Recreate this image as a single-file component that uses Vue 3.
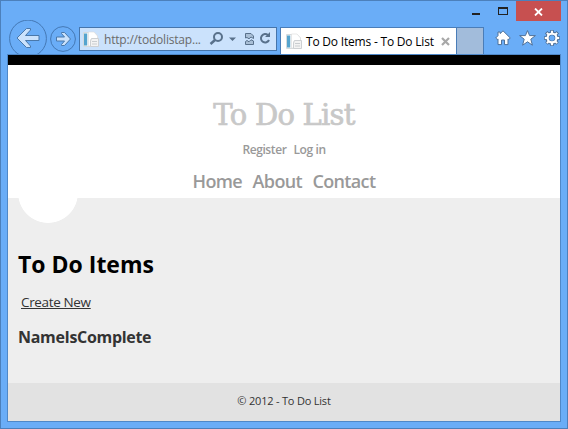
<script setup>
const account = ['Register', 'Log in']
const menu = ['Home', 'About', 'Contact']
</script>

<template>
  <div class="window">
    <div class="caption">
      <button class="ctl min" aria-label="Minimize"><svg width="8" height="2"><path d="M0 0H8V2H0Z" fill="#222" /></svg></button>
      <button class="ctl max" aria-label="Maximize"><svg width="10" height="8"><path d="M0 0H10V8H0ZM1 2V7H9V2Z" fill="#222" fill-rule="evenodd" /></svg></button>
      <button class="ctl close" aria-label="Close"><svg width="9" height="8" viewBox="0 0 9 8"><path d="M1 .5 8 7.5M8 .5 1 7.5" stroke="#fff" stroke-width="1.8" /></svg></button>
    </div>

    <div class="toolbar">
      <svg class="back" width="38" height="34" viewBox="0 0 38 34">
        <circle cx="19" cy="18.5" r="18.4" fill="none" stroke="#4478b4" />
        <path d="M8 18 17.5 8.5H21.5V10L16.5 15.5H30V20.5H16.5L21.5 26V27.5H17.5Z" fill="#cbe2fc" stroke="#4a78aa" />
      </svg>
      <svg class="forward" width="26" height="26" viewBox="0 0 26 26">
        <circle cx="13" cy="13" r="12.4" fill="none" stroke="#4478b4" />
        <path d="M20.5 13 14.5 6.5H11.5V7.5L14.5 11H6.5V15H14.5L11.5 18.5V19.5H14.5Z" fill="#cbe2fc" stroke="#4a78aa" />
      </svg>
      <div class="address">
        <svg class="page" width="17" height="17" viewBox="0 0 17 17">
          <path d="M.5 1.5H11L14.5 5V15.5H.5Z" fill="#f5f7f8" stroke="#d5dadd" />
          <path d="M1 2.5H4.2V14.5H1Z" fill="#55a4ce" />
          <path d="M5.5 1H11L14.5 5V8H8V15H5.5Z" fill="#fff" stroke="#dadada" stroke-width=".6" />
          <path d="M8.5 7.5H15.5V15.5H7.5V10Z" fill="#f3f3f3" stroke="#cdd0d3" />
          <path d="M9 10.5H14M9 13H14" stroke="#c9cdd0" />
        </svg>
        <span class="url">http://todolistap...</span>
        <svg class="tools" width="64" height="18" viewBox="0 0 64 18">
          <g fill="none" stroke="#59718b">
            <circle cx="9" cy="7" r="4" stroke-width="2" />
            <path d="M6 10 1.5 14" stroke-width="2.5" />
            <path d="M36.5 8V3.5H42L44.5 6V8.5L42 7 40 8.8 38 7.5ZM36.5 11.5V14.5H44.5V11L42 9.8 40 11.8 38 10.5Z" stroke-width="1" fill="#a9bfd6" />
            <path d="M59 5.2A4.2 4.2 0 1 0 60 10" stroke-width="2" />
          </g>
          <path d="M20 7.5H27L23.5 11ZM56 7H61V2Z" fill="#59718b" />
        </svg>
      </div>
      <div class="tab">
        <svg class="page" width="17" height="17" viewBox="0 0 17 17">
          <path d="M.5 1.5H11L14.5 5V15.5H.5Z" fill="#f5f7f8" stroke="#d5dadd" />
          <path d="M1 2.5H4.2V14.5H1Z" fill="#55a4ce" />
          <path d="M5.5 1H11L14.5 5V8H8V15H5.5Z" fill="#fff" stroke="#dadada" stroke-width=".6" />
          <path d="M8.5 7.5H15.5V15.5H7.5V10Z" fill="#f3f3f3" stroke="#cdd0d3" />
          <path d="M9 10.5H14M9 13H14" stroke="#c9cdd0" />
        </svg>
        <span class="tab-title">To Do Items - To Do List</span>
        <svg width="9" height="9" viewBox="0 0 9 9"><path d="M1 1 8 8M8 1 1 8" stroke="#a8a8a8" stroke-width="2.2" /></svg>
      </div>
      <div class="new-tab"></div>
      <div class="commands">
        <svg width="16" height="16" viewBox="0 0 16 16"><path d="M8 .8 15.3 8 13.7 9.5 13 8.9V14.6H9.5V10H6.5V14.6H3V8.9L2.3 9.5 .7 8 3 5.7V2H5.2V3.6Z" fill="#fff" stroke="#4f7199" /></svg>
        <svg width="17" height="16" viewBox="0 0 17 16"><path d="M8.5 .6 10.6 5.6H16.4L11.8 9.2 13.4 15.2 8.5 11.8 3.6 15.2 5.2 9.2 .6 5.6H6.4Z" fill="#fff" stroke="#4f7199" /></svg>
        <svg width="16" height="16" viewBox="0 0 16 16">
          <g fill="none" stroke="#4f7199">
            <circle cx="8" cy="8" r="4.5" stroke-width="4.2" />
            <path d="M8 0V16M0 8H16M2.2 2.2 13.8 13.8M13.8 2.2 2.2 13.8" stroke-width="3.6" stroke-dasharray="3 10 3" />
          </g>
          <g fill="none" stroke="#fff">
            <path d="M8 .8V3.5M8 12.5V15.2M.8 8H3.5M12.5 8H15.2M2.9 2.9 5 5M11 11 13.1 13.1M13.1 2.9 11 5M5 11 2.9 13.1" stroke-width="2" />
            <circle cx="8" cy="8" r="4.4" stroke-width="2.2" />
          </g>
          <circle cx="8" cy="8" r="2.6" fill="#6aadf7" />
        </svg>
      </div>
    </div>

    <div class="viewport">
      <header>
        <div class="site-title">To Do List</div>
        <div class="account"><a v-for="item in account" :key="item">{{ item }}</a></div>
        <nav><a v-for="item in menu" :key="item">{{ item }}</a></nav>
      </header>
      <main>
        <div class="disc"></div>
        <h1>To Do Items</h1>
        <a class="create">Create New</a>
        <div class="columns"><span>Name</span><span>IsComplete</span></div>
      </main>
      <footer>© 2012 - To Do List</footer>
    </div>
  </div>
</template>

<style>
body { margin: 0; overflow: hidden; }
</style>

<style scoped>
* { box-sizing: border-box; }
svg { display: block; flex: none; }
.window {
  width: 568px;
  height: 429px;
  padding: 0 6px 6px;
  border: 1px solid #4c80bb;
  background: #6aadf7;
  font-family: "Open Sans", "Noto Sans", sans-serif;
  white-space: nowrap;
}
.caption { display: flex; justify-content: flex-end; height: 20px; }
.ctl { display: flex; align-items: flex-start; padding: 0; border: 0; background: none; }
.min { width: 26px; padding-top: 12px; }
.max { width: 18px; padding-top: 6px; }
.close { width: 45px; justify-content: center; padding-top: 7px; background: #c75050; }
.toolbar { display: flex; height: 33px; }
.back { margin: -1px 0 0 2px; }
.forward { margin: 5px 3px 0 3px; }
.address {
  display: flex;
  align-items: center;
  width: 198px;
  height: 24px;
  margin-top: 6px;
  padding-left: 3px;
  border: 1px solid #4675ab;
  background: #cbe2fc;
}
.url { width: 105px; margin: 2px 0 0 4px; font-size: 12px; line-height: 16px; letter-spacing: -0.2px; color: #6a6a6a; }
.tab {
  display: flex;
  align-items: center;
  width: 177px;
  height: 27px;
  margin: 6px 0 0 3px;
  padding-left: 5px;
  border: 1px solid #4a7db8;
  border-bottom: 0;
  background: #fff;
}
.tab-title { width: 130px; margin: 1px 5px 0 3px; font-size: 12px; line-height: 16px; letter-spacing: -0.2px; color: #000; }
.new-tab { width: 27px; height: 27px; margin-top: 6px; border: 1px solid #4a7db8; border-width: 1px 1px 0 0; background: #a2bcdb; }
.commands { display: flex; gap: 8px; margin: 9px 0 0 11px; }
.viewport { display: flex; flex-direction: column; width: 554px; height: 368px; border: 1px solid #4f88c8; background: #fff; }
header { display: flex; flex-direction: column; align-items: center; height: 143px; border-top: 10px solid #000; }
.site-title { margin-top: 31px; font: 29px/38px "DejaVu Serif", serif; letter-spacing: -0.75px; -webkit-text-stroke: 0.7px #c8c8c8; color: #c8c8c8; }
.account { display: flex; gap: 7px; margin-top: 8px; font-size: 12px; line-height: 16px; font-weight: 600; letter-spacing: -0.4px; color: #999; }
nav { display: flex; gap: 10.5px; margin-top: 10px; font-size: 18px; line-height: 26px; font-weight: 600; letter-spacing: -0.65px; color: #999; }
main { display: flex; flex-direction: column; align-items: flex-start; height: 185px; padding-left: 10px; background: #eee; }
.disc { width: 60px; height: 25px; overflow: hidden; background: radial-gradient(circle 30px at 30px -5px, #fff 29.5px, transparent 30.2px); }
h1 { margin: 25px 0 0; font-size: 23px; line-height: 32px; font-weight: 700; color: #000; }
.create { margin: 13px 0 0 3px; font-size: 13.5px; line-height: 19px; letter-spacing: -0.35px; color: #333; text-decoration: underline; }
.columns { display: flex; margin-top: 14px; font-size: 16px; line-height: 22px; font-weight: 700; letter-spacing: -0.33px; color: #333; }
footer { height: 38px; background: #e2e2e2; color: #333; font-size: 11px; line-height: 36px; letter-spacing: -0.2px; text-align: center; }
</style>
